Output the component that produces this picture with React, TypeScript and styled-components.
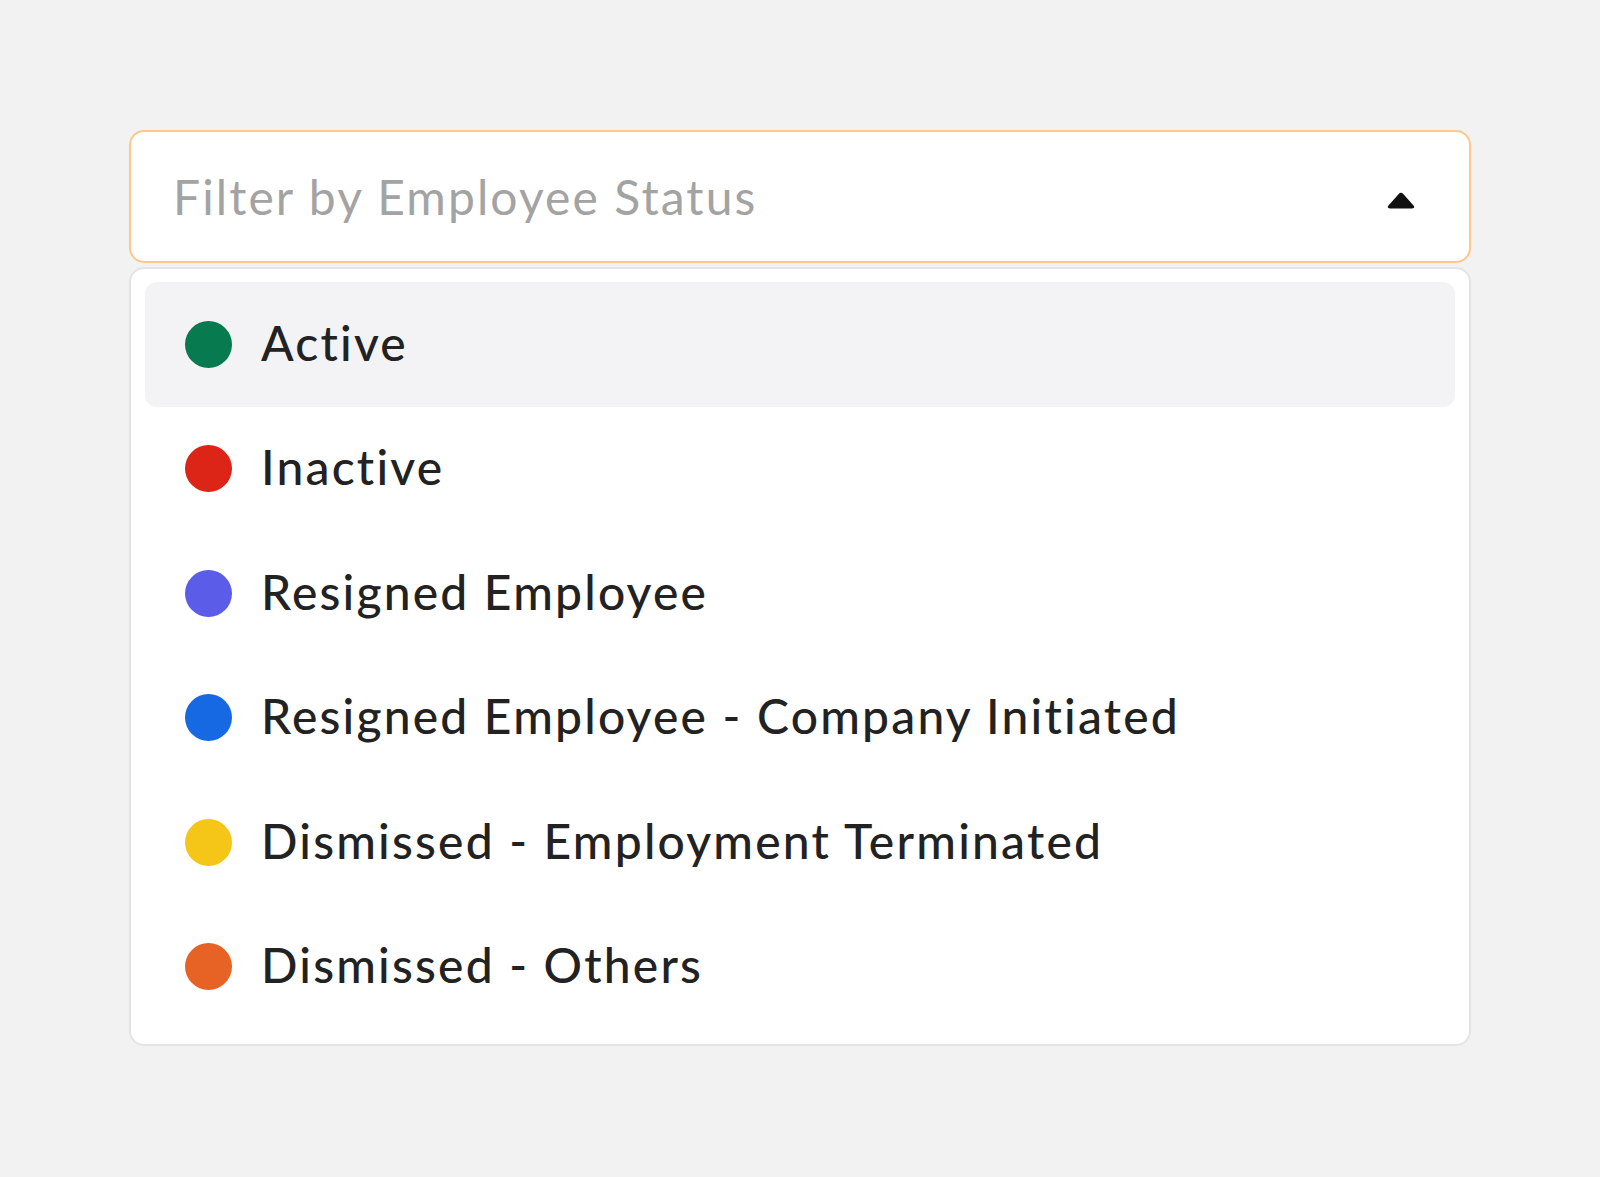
import React from "react";
import styled, { createGlobalStyle } from "styled-components";

const Global = createGlobalStyle`
  html, body { margin: 0; padding: 0; background: #f2f2f2; }
  body { font-family: "Lato", "Open Sans", sans-serif; }
`;

const Page = styled.div`
  min-height: 1177px;
  padding: 130px 129px 0 129px;
  box-sizing: border-box;
`;

const Select = styled.div`
  width: 1342px;
  display: flex;
  flex-direction: column;
  gap: 4px;
`;

const Trigger = styled.div`
  height: 133px;
  box-sizing: border-box;
  border: 2px solid #fdc88a;
  border-radius: 15px;
  background: #fff;
  display: flex;
  align-items: center;
  justify-content: space-between;
  padding: 0 54px 0 42px;
`;

const Placeholder = styled.span`
  font-size: 48px;
  color: #a3a3a3;
  letter-spacing: 2.1px;
`;

const Arrow = styled.svg`
  margin-top: 8px;
`;

const Menu = styled.div`
  box-sizing: border-box;
  border: 2px solid #e4e4e7;
  border-radius: 15px;
  background: #fff;
  padding: 13px 14px 15px 14px;
  display: flex;
  flex-direction: column;
`;

const Item = styled.div<{ $active?: boolean }>`
  height: 124.5px;
  display: flex;
  align-items: center;
  gap: 29px;
  padding-left: 40px;
  border-radius: 12px;
  background: ${(p) => (p.$active ? "#f3f3f5" : "transparent")};
`;

const Dot = styled.span<{ $color: string }>`
  width: 47px;
  height: 47px;
  border-radius: 50%;
  background: ${(p) => p.$color};
  flex: none;
`;

const Label = styled.span`
  font-size: 48px;
  font-weight: 500;
  color: #222222;
  letter-spacing: 2.2px;
  margin-top: -4px;
`;

const items = [
  { label: "Active", color: "#077a50" },
  { label: "Inactive", color: "#dc2417" },
  { label: "Resigned Employee", color: "#5b5ce8" },
  { label: "Resigned Employee - Company Initiated", color: "#1768e3" },
  { label: "Dismissed - Employment Terminated", color: "#f5c618" },
  { label: "Dismissed - Others", color: "#e66325" },
];

export default function App() {
  return (
    <>
      <Global />
      <Page>
        <Select>
          <Trigger>
            <Placeholder>Filter by Employee Status</Placeholder>
            <Arrow width="28" height="18" viewBox="0 0 28 18">
              <path
                d="M11.5 2.2 Q14 -0.6 16.5 2.2 L26.5 13.6 Q28.6 16.5 25 16.5 L3 16.5 Q-0.6 16.5 1.5 13.6 Z"
                fill="#111"
              />
            </Arrow>
          </Trigger>
          <Menu>
            {items.map((it, i) => (
              <Item key={it.label} $active={i === 0}>
                <Dot $color={it.color} />
                <Label>{it.label}</Label>
              </Item>
            ))}
          </Menu>
        </Select>
      </Page>
    </>
  );
}
